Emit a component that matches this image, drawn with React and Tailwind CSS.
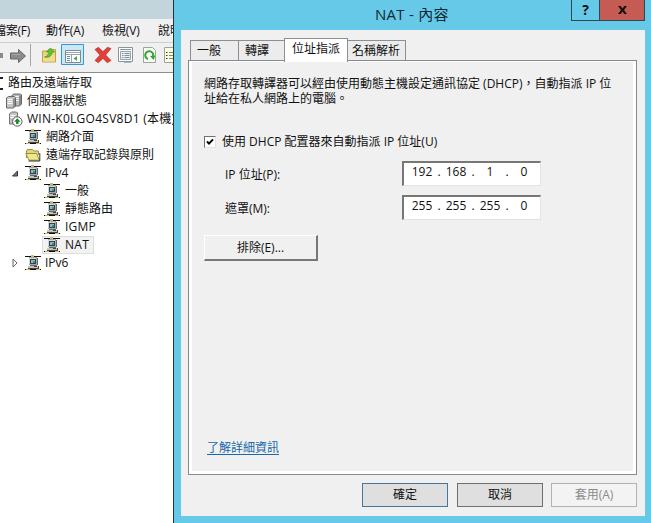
import React from "react";

const FONT = "font-['Open_Sans','Noto_Sans_CJK_TC',sans-serif]";

function NetIcon() {
  return (
    <svg width="16" height="16" viewBox="0 0 16 16" className="shrink-0" shapeRendering="crispEdges">
      <path d="M0 1h16v1H0zM0 14h16v1H0z" fill="#111" />
      <path d="M6 0h3v2H6zM1 14h4v1H1zM11 14h4v1h-4z" fill="#c9c05a" />
      <path d="M4 2h8v8H4z" fill="#a9a9a9" />
      <path d="M4 3h7v6H4z" fill="#d5d5d5" />
      <path d="M5 4h6v5H5z" fill="#33424a" />
      <path d="M6 5h4v3H6z" fill="#7cc0c0" />
      <path d="M8 6h2v2H8z" fill="#3c8d92" />
      <path d="M12 3h1v7h-1zM5 10h7v1H5z" fill="#666" />
      <path d="M3 11h10v2H3z" fill="#c2c2c2" />
      <path d="M3 13h11v1H3zM13 11h1v2h-1zM9 11h3v1H9z" fill="#444" />
    </svg>
  );
}

function FolderIcon() {
  return (
    <svg width="16" height="14" viewBox="0 0 16 14" className="shrink-0">
      <path d="M1.500 10V3l1-1.500h5L9 3h4.500v4" fill="#e0d67a" stroke="#9a9045" />
      <path d="M.8 5.500h10.700l3 6.700H4z" fill="#f0e88e" stroke="#9a9045" />
      <path d="M3.500 13h11.300V5" fill="none" stroke="#333" />
    </svg>
  );
}

function ServersIcon() {
  return (
    <svg width="16" height="16" viewBox="0 0 16 16" className="shrink-0">
      <path d="M5.500 3l2-2h7l1 1v9l-2 2h-8z" fill="#b9b9b9" stroke="#666" />
      <path d="M7 3.500h6M7 5.500h6M7 7.500h6" stroke="#f5f5f5" />
      <path d="M.5 5l2-1.500h6l1 1V13l-2 2H.5z" fill="#c6c6c6" stroke="#666" />
      <path d="M1.500 6.500h5M1.500 8.500h5M1.500 10.500h5" stroke="#fff" />
      <path d="M8 5.500V14M14 2.500V12" stroke="#555" />
    </svg>
  );
}

function ServerUpIcon() {
  return (
    <svg width="15" height="16" viewBox="0 0 15 16" className="shrink-0">
      <path d="M1.500 3l2-2h5l1 1v9l-1 2h-7z" fill="#c3c3c3" stroke="#777" />
      <path d="M2.500 4.500h5M2.500 6.500h5" stroke="#fff" />
      <circle cx="9.300" cy="10.500" r="4.700" fill="#fff" stroke="#444" strokeWidth=".9" />
      <path d="M9.300 7.300l3.200 3.400h-2V13H8.100v-2.300h-2z" fill="#128a22" />
    </svg>
  );
}

function Arrow({ open }) {
  return (
    <svg width="8" height="10" viewBox="0 0 8 10" className="mr-[6px] ml-[11px] shrink-0">
      {open ? (
        <path d="M6.500 3v5h-5z" fill="#777" stroke="#333" />
      ) : (
        <path d="M2 1l4 4-4 4z" fill="#fff" stroke="#666" />
      )}
    </svg>
  );
}

function Row({ pad, icon, width = "", tracking = "", children }) {
  return (
    <div className={`flex h-[18px] items-center ${pad}`}>
      {icon}
      <span className={`whitespace-nowrap ${width} ${tracking}`}>{children}</span>
    </div>
  );
}

function Toolbar() {
  return (
    <svg width="173" height="29" viewBox="0 0 173 29" className="block">
      <path d="M0 10h3v5H0z" fill="#8a8a8a" />
      <path d="M10.500 10h8V6.500l7 6.500-7 6.500V16h-8z" fill="#8b8b8b" stroke="#666" />
      <path d="M12 11.500h8" stroke="#aaa" />
      <path d="M30.500 1v22" stroke="#a5a5a5" />
      <path d="M42.500 8h5l1-1.500h7V19h-13z" fill="#ecd27c" stroke="#c1a14c" />
      <path d="M43 12h12v6.500H43z" fill="#f3dc91" />
      <path d="M44.500 14c3-1 4.500-3 4.500-5h-2.500l4-4 4 4H52c0 4-3 6-7.500 5z" fill="#62c52d" stroke="#36951b" strokeWidth=".7" />
      <path d="M61.500 1.500h22v20h-22z" fill="#cbe8f8" stroke="#3997cd" />
      <path d="M65.500 7.500h15v12h-15z" fill="#fff" stroke="#7d8996" />
      <path d="M66 9.500h14M66 11.500h14M71.500 12v7" stroke="#9aa3ad" />
      <path d="M67 13.500h3M67 15.500h3M67 17.500h3" stroke="#5d8dbd" />
      <path d="M77 13v5l-3.500-2.500z" fill="#44aa3a" />
      <path d="M95 6.500l3.300-2.200 4.700 4.300 4.500-4.300 3.500 1.200-5.300 6.500 5.300 5.500-3.700 2.300-4.300-4.300-4.700 4.300-3.300-2.300 5-5.500z" fill="#e0403a" stroke="#b62620" strokeWidth=".6" />
      <path d="M118.500 4.500h14v14h-14z" fill="#fff" stroke="#8c949b" />
      <path d="M120 6.500h11" stroke="#8c949b" />
      <path d="M120.500 8.500h10v8h-10z" fill="#eee" stroke="#9ba4ac" />
      <path d="M122 10.500h1.500m1 0h5M122 12.500h1.500m1 0h5M122 14.500h1.500m1 0h5" stroke="#7894ad" />
      <path d="M124 19.500h7" stroke="#87c9dc" />
      <path d="M143.500 4.500h9l3 3v12h-12z" fill="#fbfbf5" stroke="#9ba49b" />
      <path d="M148 16a4 4 0 1 1 5-2.500" fill="none" stroke="#33a334" strokeWidth="2" />
      <path d="M150 13l5.500-.5-2 4.500z" fill="#33a334" />
      <path d="M164.500 4.500h12v15h-12z" fill="#fdfbe2" stroke="#9ba49b" />
      <path d="M166 9.500h1.500M166 12.500h1.500M166 15.500h1.500" stroke="#333" />
      <path d="M169 9.500h5M169 12.500h5M169 15.500h5" stroke="#74955f" />
    </svg>
  );
}

function ConsoleWindow() {
  return (
    <div className="flex w-[173px] shrink-0 flex-col overflow-hidden bg-white">
      <div className="h-[19px] shrink-0 bg-[#c3d5dc]" />
      <div className="flex h-[24px] shrink-0 items-center border-b border-[#cfcfcf] bg-[#f0f0f0] whitespace-nowrap">
        <span className="-ml-[6px] w-[52px] shrink-0 tracking-[-0.25px]">檔案(F)</span>
        <span className="w-[56px] shrink-0 tracking-[-0.1px]">動作(A)</span>
        <span className="w-[56px] shrink-0 tracking-[-0.1px]">檢視(V)</span>
        <span className="shrink-0">說明(H)</span>
      </div>
      <div className="h-[30px] shrink-0 border-b border-[#8e8e8e] bg-[#f0f0f0]">
        <Toolbar />
      </div>
      <div className="flex flex-col pt-[1px]">
        <Row pad="gap-[5px]" icon={<i className="h-[13px] w-[3px] border-y-2 border-[#222]" />}>路由及遠端存取</Row>
        <Row pad="pl-[6px] gap-[5px]" icon={<ServersIcon />}>伺服器狀態</Row>
        <Row pad="pl-[8px] gap-[4px]" icon={<ServerUpIcon />} tracking="tracking-[0.26px]">WIN-K0LGO4SV8D1 (本機)</Row>
        <Row pad="pl-[25px] gap-[5px]" icon={<NetIcon />}>網路介面</Row>
        <Row pad="pl-[25px] gap-[5px]" icon={<FolderIcon />}>遠端存取記錄與原則</Row>
        <Row pad="" icon={<><Arrow open /><NetIcon /></>} width="ml-[4px]">IPv4</Row>
        <Row pad="pl-[44px] gap-[5px]" icon={<NetIcon />}>一般</Row>
        <Row pad="pl-[44px] gap-[5px]" icon={<NetIcon />}>靜態路由</Row>
        <Row pad="pl-[44px] gap-[5px]" icon={<NetIcon />} tracking="tracking-[0.2px]">IGMP</Row>
        <div className="ml-[42px] flex h-[18px] w-[52px] items-center gap-[5px] border border-[#dedede] bg-[#f2f2f2] pl-[1px]">
          <NetIcon />
          <span className="tracking-[0.3px]">NAT</span>
        </div>
        <Row pad="" icon={<><Arrow /><NetIcon /></>} width="ml-[4px]">IPv6</Row>
      </div>
    </div>
  );
}

function IpField({ parts }) {
  return (
    <div className="flex h-[25px] w-[139px] border-t-2 border-r border-b border-l-2 border-t-[#777] border-r-[#e3e3e3] border-b-[#e3e3e3] border-l-[#777] bg-white pl-[3px] leading-[18px]">
      {parts.map((p, i) => (
        <React.Fragment key={i}>
          <span className="w-[30px] text-center">{p}</span>
          {i < 3 && <span className="w-[4px] text-center">.</span>}
        </React.Fragment>
      ))}
    </div>
  );
}

function Tabs() {
  const base = "flex h-[20px] items-center border-t border-[#8c8f94] bg-[#ececec] whitespace-nowrap";
  return (
    <div className="ml-[2px] flex h-[22px] items-end">
      <div className={`${base} w-[48px] border-l pl-[6px]`}>一般</div>
      <div className={`${base} w-[46px] border-l pl-[6px]`}>轉譯</div>
      <div className="relative top-[2px] flex h-[24px] w-[64px] items-center justify-center border-x border-t border-[#8c8f94] bg-white pb-[3px]">位址指派</div>
      <div className={`${base} w-[58px] border-r pl-[4px]`}>名稱解析</div>
    </div>
  );
}

function Dialog() {
  return (
    <div className="flex flex-1 flex-col border-l border-[#20343c] bg-[#67c9e8] pr-[7px] pb-[7px] pl-[7px]">
      <div className="flex h-[30px] shrink-0 items-start">
        <div className="w-[390px] pl-[194px] text-[15px] leading-[29px] tracking-[0.25px] text-[#0e2a35]">NAT - 內容</div>
        <div className="flex h-[21px] w-[74px] border border-t-0 border-[#2b4a55] text-[#101010]">
          <div className="flex w-[28px] items-center justify-center border-r border-[#2b4a55] pb-px text-[14px] font-bold">?</div>
          <div className="flex flex-1 items-center justify-center bg-[#c55c53]">
            <svg width="9" height="8" viewBox="0 0 10 9">
              <path d="M0 0h3l2 2.700L7 0h3L6.700 4.500 10 9H7L5 6.300 3 9H0l3.300-4.500z" fill="#151010" />
            </svg>
          </div>
        </div>
      </div>
      <div className="flex flex-1 flex-col bg-[#f0f0f0] pt-[8px] pl-[7px]">
        <Tabs />
        <div className="flex h-[415px] w-[449px] border border-[#858991] bg-white px-[3px] pt-[1px] pb-[3px]">
          <div className="flex flex-1 flex-col bg-[#f0f0f0] pl-[12px]">
            <div className="mt-[14px] flex flex-col whitespace-nowrap">
              <p className="h-[15px] leading-[15px]">網路存取轉譯器可以經由使用動態主機設定通訊協定 (DHCP)，自動指派 IP 位</p>
              <p className="h-[15px] leading-[15px]">址給在私人網路上的電腦。</p>
            </div>
            <div className="mt-[27px] flex h-[18px] items-center gap-[6px]">
              <span className="flex h-[12px] w-[12px] items-center justify-center border border-t-[#707070] border-r-[#e3e3e3] border-b-[#e3e3e3] border-l-[#707070] bg-white">
                <svg width="8" height="8" viewBox="0 0 8 8"><path d="M1 3.500l2 2.200L7 1.300" fill="none" stroke="#000" strokeWidth="1.900" /></svg>
              </span>
              <span>使用 DHCP 配置器來自動指派 IP 位址(U)</span>
            </div>
            <div className="mt-[10px] flex h-[25px] items-center">
              <span className="w-[178px] pt-[3px] pl-[21px]">IP 位址(P):</span>
              <span className="ml-[20px]"><IpField parts={["192", "168", "1", "0"]} /></span>
            </div>
            <div className="mt-[9px] flex h-[25px] items-center">
              <span className="w-[178px] pt-[3px] pl-[21px]">遮罩(M):</span>
              <span className="ml-[20px]"><IpField parts={["255", "255", "255", "0"]} /></span>
            </div>
            <div className="mt-[15px] flex h-[26px] w-[114px] items-center justify-center border-t border-r-2 border-b-2 border-l border-t-white border-r-[#777] border-b-[#777] border-l-white">排除(E)...</div>
            <div className="mt-auto mb-[15px] ml-[3px] text-[#1868a8] underline underline-offset-2">了解詳細資訊</div>
          </div>
        </div>
        <div className="mt-[8px] ml-[174px] flex h-[24px] gap-[9px]">
          <div className="flex w-[86px] items-center justify-center border border-[#477698] bg-[#dfdfdf]">確定</div>
          <div className="flex w-[86px] items-center justify-center border border-[#6f6f6f] bg-[#dfdfdf]">取消</div>
          <div className="-ml-px flex w-[86px] items-center justify-center border border-[#b2b2b2] bg-[#f3f3f3] text-[#8a8a8a]">套用(A)</div>
        </div>
      </div>
    </div>
  );
}

export default function App() {
  return (
    <div className={`flex h-[523px] w-[651px] overflow-hidden text-[12px] leading-[16px] text-[#111] ${FONT}`}>
      <ConsoleWindow />
      <Dialog />
    </div>
  );
}
